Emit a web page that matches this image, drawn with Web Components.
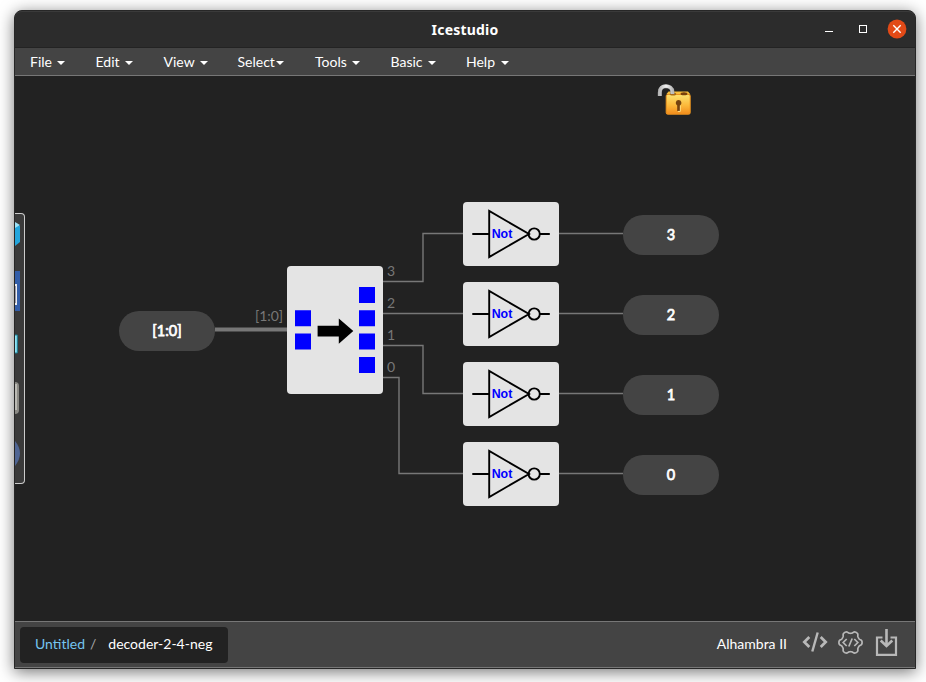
<!DOCTYPE html>
<html lang="en">
<head>
<meta charset="utf-8">
<title>Icestudio</title>
<style>
body{margin:0;background:#fff;width:926px;height:682px;overflow:hidden;font-family:Lato,"Liberation Sans",sans-serif}
</style>
</head>
<body>
<ice-app></ice-app>
<script>
class Base extends HTMLElement {
  paint(html) { this.attachShadow({mode: 'open'}).innerHTML = html; }
}

customElements.define('title-bar', class extends Base {
  connectedCallback() {
    this.paint(`<style>
:host{display:grid;grid-template-columns:1fr auto 1fr;align-items:center;height:37px;box-sizing:border-box;background:#2c2c2c;border-top:1px solid #3a3a3a;border-bottom:1px solid #232323;color:#fff;border-radius:7px 7px 0 0}
.t{grid-column:2;font:bold 14px/20px "Noto Sans",sans-serif;letter-spacing:.2px;padding-top:1px}
svg{justify-self:end;display:block;margin:-1px 5px 0 0}
</style><span class="t"><slot></slot></span>
<svg width="88" height="20" viewBox="0 0 88 20"><path d="M3 12.5h8" stroke="#fff"/><rect x="37.5" y="6.5" width="7" height="7" fill="none" stroke="#fff"/><circle cx="75" cy="10" r="9.4" fill="#e24a17"/><path d="M71.3 6.3l7.4 7.4m0-7.4l-7.4 7.4" stroke="#fff" stroke-width="1.4"/></svg>`);
  }
});

customElements.define('menu-item', class extends Base {
  connectedCallback() {
    this.paint(`<style>
:host{display:flex;align-items:center;gap:var(--gap,5.5px);flex:none;box-sizing:border-box}
i{width:0;height:0;border:4px solid transparent;border-top-color:#fff;border-bottom:0;margin-top:2px}
</style><slot></slot><i></i>`);
  }
});

customElements.define('menu-bar', class extends Base {
  connectedCallback() {
    this.paint(`<style>
:host{display:flex;height:28px;box-sizing:border-box;background:#444;border-bottom:1px solid #777;padding-left:15px;font-size:14px;line-height:27px;color:#fff}
</style>
<menu-item style="width:65.5px">File</menu-item><menu-item style="width:68px">Edit</menu-item><menu-item style="width:74px">View</menu-item><menu-item style="width:77.5px;--gap:1.5px">Select</menu-item><menu-item style="width:75.5px">Tools</menu-item><menu-item style="width:75.5px">Basic</menu-item><menu-item>Help</menu-item>`);
  }
});

customElements.define('port-node', class extends Base {
  connectedCallback() {
    this.paint(`<style>
:host{position:absolute;display:flex;align-items:center;justify-content:center;width:96px;height:40px;border-radius:20px;background:#444;color:#fff;font-size:14.5px;line-height:20px;-webkit-text-stroke:.75px #fff}
</style><slot></slot>`);
  }
});

customElements.define('not-gate', class extends Base {
  connectedCallback() {
    this.paint(`<style>
:host{position:absolute;display:block;width:96px;height:64px;border-radius:4px;background:#e4e4e4}
svg{display:block}
text{font:bold 12px "Liberation Sans",Arial,sans-serif;fill:#00f}
</style><svg width="96" height="64" viewBox="0 0 96 64"><g fill="none" stroke="#000" stroke-width="1.9"><path d="M9.3 32H26M26.2 9v46L66 32zM76.8 32h10"/><circle cx="71.2" cy="32" r="5.6"/></g><text x="28.7" y="36" textLength="20.6" lengthAdjust="spacingAndGlyphs">Not</text></svg>`);
  }
});

customElements.define('decoder-node', class extends Base {
  connectedCallback() {
    this.paint(`<style>
:host{position:absolute;display:block;width:96px;height:128px;border-radius:4px;background:#e4e4e4}
svg{display:block}
</style><svg width="96" height="128" viewBox="0 0 96 128"><path fill="#00f" d="M8 44.3h16v16H8zM8 67.5h16v16H8zM72 21h16v16H72zM72 44.3h16v16H72zM72 67.5h16v16H72zM72 91h16v16H72z"/><path d="M30.6 59.7h21.2v-7.2L66.3 65 51.8 77.8v-7.3H30.6z"/></svg>`);
  }
});

customElements.define('side-palette', class extends Base {
  connectedCallback() {
    this.paint(`<style>
:host{position:absolute;display:block;box-sizing:border-box;width:10px;height:271px;background:#3a3a3a;border:1px solid #ccc;border-left:0;border-radius:0 4px 4px 0;overflow:hidden}
svg{display:block}
</style><svg width="9" height="269" viewBox="0 0 9 269">
<path d="M0 9l5 3v16l-5 4z" fill="#23a5dc"/><path d="M0 8l5 3-5 3z" fill="#9be2f7"/>
<path d="M0 57h5v40H0z" fill="#335ea9"/><path d="M0 70h2v21H0z" fill="#eee"/><path d="M0 72h1v17H0z" fill="#99a"/>
<path d="M0 121h2.3v18H0" fill="#8de4f5" stroke="#1b7e94"/>
<path d="M0 168q4 0 4 4v24q0 4-4 4z" fill="#8b8a85"/><path d="M0 170h2v26H0z" fill="#bbbab4"/>
<path d="M0 227q10 12 0 25z" fill="#4f6593"/></svg>`);
  }
});

customElements.define('lock-badge', class extends Base {
  connectedCallback() {
    this.paint(`<style>:host{position:absolute;display:block}svg{display:block}</style>
<svg width="36" height="34" viewBox="0 0 36 34"><defs><linearGradient id="g" x2="0" y2="1"><stop stop-color="#fce270"/><stop offset=".55" stop-color="#fcb93b"/><stop offset="1" stop-color="#f28b1c"/></linearGradient><linearGradient id="s"><stop stop-color="#bbb"/><stop offset=".5" stop-color="#f2f2f2"/><stop offset="1" stop-color="#bbb"/></linearGradient></defs>
<path d="M9.500 10l2-2.500h19.500l2.500 3z" fill="#f8bd3b"/><rect x="9.200" y="10.500" width="24" height="19.700" rx="1.500" fill="url(#g)" stroke="#ed941e"/>
<ellipse cx="27" cy="9.800" rx="3.400" ry="1.500" fill="#79400b"/><ellipse cx="16" cy="10" rx="3.200" ry="1.500" fill="#a86a1a"/>
<path d="M2.800 12V8.500C2.800 4 5.600 2.200 8.900 2.200S15.400 4 15.400 8v2" fill="none" stroke="#999" stroke-width="4"/><path d="M2.800 12V8.500C2.800 4 5.600 2.200 8.900 2.200S15.400 4 15.400 8v2" fill="none" stroke="url(#s)" stroke-width="3.200"/>
<path d="M21.500 16a2.900 2.900 0 0 1 1.500 5.400V27h-2.800v-5.600A2.900 2.900 0 0 1 21.500 16z" fill="#74420f"/><path d="M23.300 21.500V27.400h-2.400" stroke="#fff0a0" fill="none" stroke-width=".8"/></svg>`);
  }
});

customElements.define('design-canvas', class extends Base {
  connectedCallback() {
    const rows = [3, 2, 1, 0];
    this.paint(`<style>
:host{position:relative;display:block;height:545px;background:#222;overflow:hidden}
.w{display:block}
text{font:14px Lato,sans-serif;fill:#777}
</style>
<svg class="w" width="900" height="545" viewBox="15 76 900 545"><g fill="none" stroke="#777" stroke-width="1.4">
<path d="M383 281.500H423V233.500H463M383 313.500H463M383 345.500H423V393.500H463M383 377.500H399V473.500H463"/>
<path d="M559 233.500H623M559 313.500H623M559 393.500H623M559 473.500H623"/><path d="M215 329.500H287" stroke-width="4"/></g>
<text x="255" y="321" textLength="28">[1:0]</text><text x="387" y="276">3</text><text x="387" y="308">2</text><text x="387" y="340">1</text><text x="387" y="372">0</text></svg>
<port-node style="left:104px;top:235px">[1:0]</port-node>
<decoder-node style="left:272px;top:190px"></decoder-node>
${rows.map((n, i) => `<not-gate style="left:448px;top:${126 + i * 80}px"></not-gate><port-node style="left:608px;top:${139 + i * 80}px">${n}</port-node>`).join('')}
<side-palette style="left:0;top:137px"></side-palette>
<lock-badge style="left:642px;top:8px"></lock-badge>`);
  }
});

customElements.define('status-bar', class extends Base {
  connectedCallback() {
    const gear = [];
    for (let i = 0; i <= 120; i++) {
      const a = i * Math.PI / 60;
      const r = 10.4 + 1.3 * Math.tanh(1.5 * Math.cos(6 * a));
      gear.push((12.5 + r * Math.cos(a)).toFixed(2) + ' ' + (12.5 + r * Math.sin(a)).toFixed(2));
    }
    this.paint(`<style>
:host{display:flex;align-items:center;height:47px;box-sizing:border-box;background:#444;border-top:1px solid #777;border-bottom:1px solid #777;font-size:14px;line-height:20px;color:#fff;padding:0 17px 0 5px}
.crumb{display:flex;align-items:center;height:36px;width:208px;box-sizing:border-box;padding:0 15px 2px;background:#222;border-radius:4px;white-space:nowrap}
.a{color:#75c5f0}.s{color:#aaa;margin:0 12px 0 5px}
.b{margin:-2px 15px 0 auto}
svg{display:block;flex:none;fill:none;stroke:#b8b8b8}
</style>
<div class="crumb"><span class="a">Untitled</span><span class="s">/</span><span>decoder-2-4-neg</span></div>
<span class="b">Alhambra II</span>
<svg width="26" height="22" viewBox="0 0 26 22" stroke-width="2.700" style="margin:-6px 10px 0 0"><path d="M7.300 6L2.300 11l5 5M18.700 6L23.700 11l-5 5"/><path d="M15.700 1.500l-5.400 19" stroke-width="2.400"/></svg>
<svg width="25" height="25" viewBox="0 0 25 25" stroke-width="1.700" style="margin:-5px 12px 0 0"><path d="M${gear.join('L')}Z"/><path d="M8.700 9L5.200 12.500l3.500 3.500M16.300 9l3.500 3.500-3.500 3.500M14.200 8.500l-3.400 8"/></svg>
<svg width="23" height="29" viewBox="0 0 23 29" stroke-width="2.200" style="margin-top:-5px"><path d="M7.500 9.500H2v17.300h19V9.500h-5.500"/><path d="M11.500 1v16M5.700 12.500l5.800 5.500 5.800-5.500" stroke-width="2.600"/></svg>`);
  }
});

customElements.define('ice-app', class extends Base {
  connectedCallback() {
    this.paint(`<style>
:host{display:block;padding:10px 10px 13px 14px;height:682px;box-sizing:border-box}
.win{display:flex;flex-direction:column;width:902px;height:659px;box-sizing:border-box;border:1px solid #272727;border-radius:8px 8px 0 0;background:#272727;box-shadow:0 3px 16px rgba(0,0,0,.55)}
</style><div class="win"><title-bar>Icestudio</title-bar><menu-bar></menu-bar><design-canvas></design-canvas><status-bar></status-bar></div>`);
  }
});
</script>
</body>
</html>
